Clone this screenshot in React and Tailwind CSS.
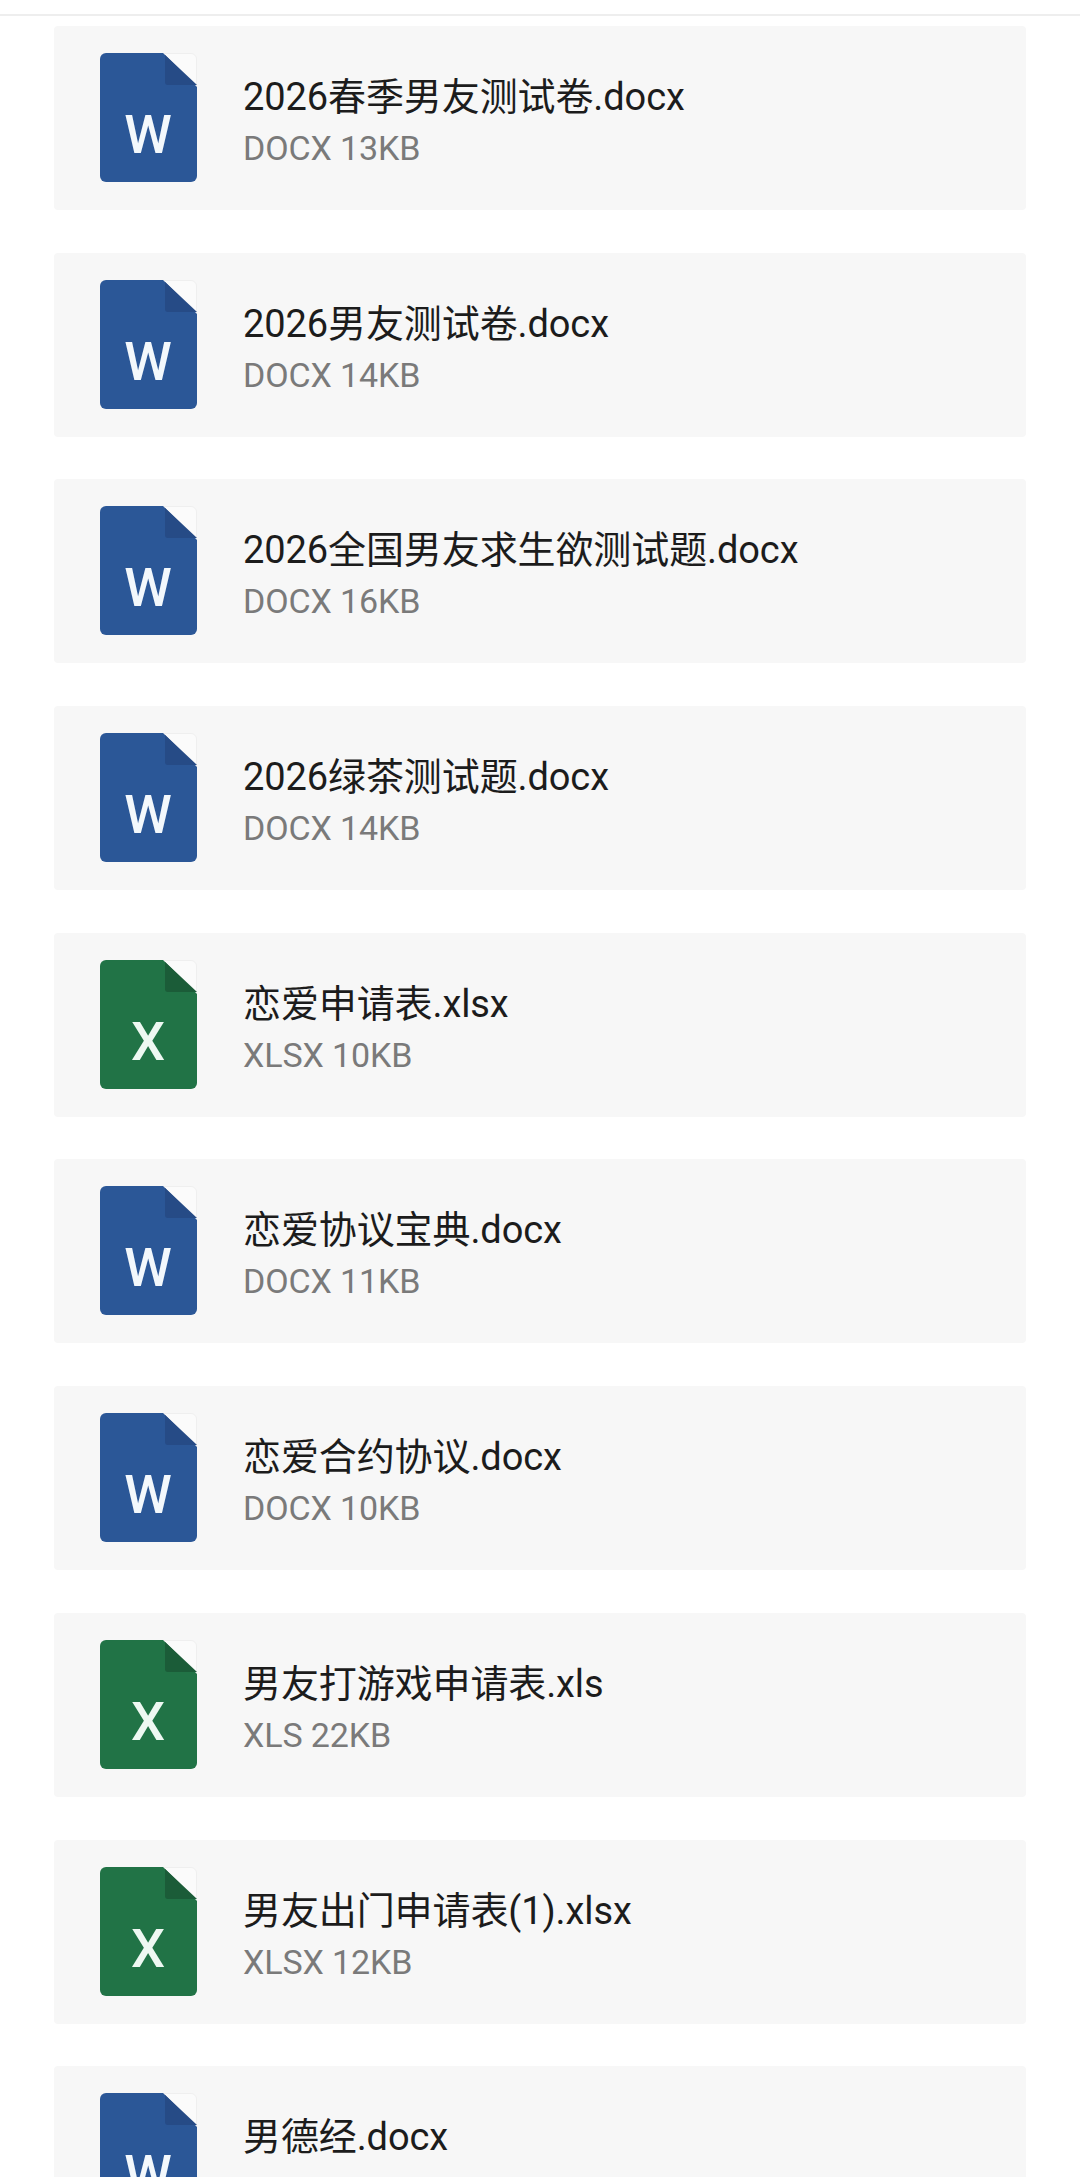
const files = [
  { name: "2026春季男友测试卷.docx", meta: "DOCX 13KB", type: "w" },
  { name: "2026男友测试卷.docx", meta: "DOCX 14KB", type: "w" },
  { name: "2026全国男友求生欲测试题.docx", meta: "DOCX 16KB", type: "w" },
  { name: "2026绿茶测试题.docx", meta: "DOCX 14KB", type: "w" },
  { name: "恋爱申请表.xlsx", meta: "XLSX 10KB", type: "x" },
  { name: "恋爱协议宝典.docx", meta: "DOCX 11KB", type: "w" },
  { name: "恋爱合约协议.docx", meta: "DOCX 10KB", type: "w" },
  { name: "男友打游戏申请表.xls", meta: "XLS 22KB", type: "x" },
  { name: "男友出门申请表(1).xlsx", meta: "XLSX 12KB", type: "x" },
  // size line of the last row is below the fold
  { name: "男德经.docx", type: "w" },
];

function FileIcon({ type }) {
  const word = type === "w";
  const body = word ? "#2b5797" : "#217346";
  const fold = word ? "#264b86" : "#1b5c38";
  return (
    <svg width="97" height="129" viewBox="0 0 97 129" className="shrink-0">
      <path d="M63 .5H91a5.5 5.5 0 0 1 5.5 5.5V33Z" fill="#fbfbfb" stroke="#efefef" />
      <path d="M6 0H63L97 34V123a6 6 0 0 1-6 6H6a6 6 0 0 1-6-6V6a6 6 0 0 1 6-6Z" fill={body} />
      <path d="M63 0L97 32H68a3 3 0 0 1-3-3V2Z" fill={fold} />
      <text x="48" y="100" textAnchor="middle" fontSize="54" fill={word ? "#f3f8fc" : "#eef8f2"} fontFamily="Roboto, sans-serif" fontWeight="500">
        {word ? "W" : "X"}
      </text>
    </svg>
  );
}

export default function App() {
  return (
    <div className="h-[2177px] overflow-hidden bg-white font-['Roboto','Noto_Sans_CJK_SC',sans-serif]">
      <div className="h-4 border-b-2 border-[#eeeeee]" />
      <div className="flex flex-col gap-[42.7px] pt-[10px] pl-[54px] pr-[54px]">
        {files.map((f) => (
          <div key={f.name} className="flex h-[184px] shrink-0 items-start gap-[46px] rounded-[4px] bg-[#f7f7f7] pl-[46px] pt-[27px]">
            <FileIcon type={f.type} />
            <div className="pt-[21px]">
              <div className="text-[38px] leading-[46px] tracking-[-0.1px] text-[#1c1c1c]">{f.name}</div>
              {f.meta ? <div className="mt-[8px] text-[34px] leading-[40px] tracking-[-0.1px] text-[#7a7a7a]">{f.meta}</div> : null}
            </div>
          </div>
        ))}
      </div>
    </div>
  );
}
